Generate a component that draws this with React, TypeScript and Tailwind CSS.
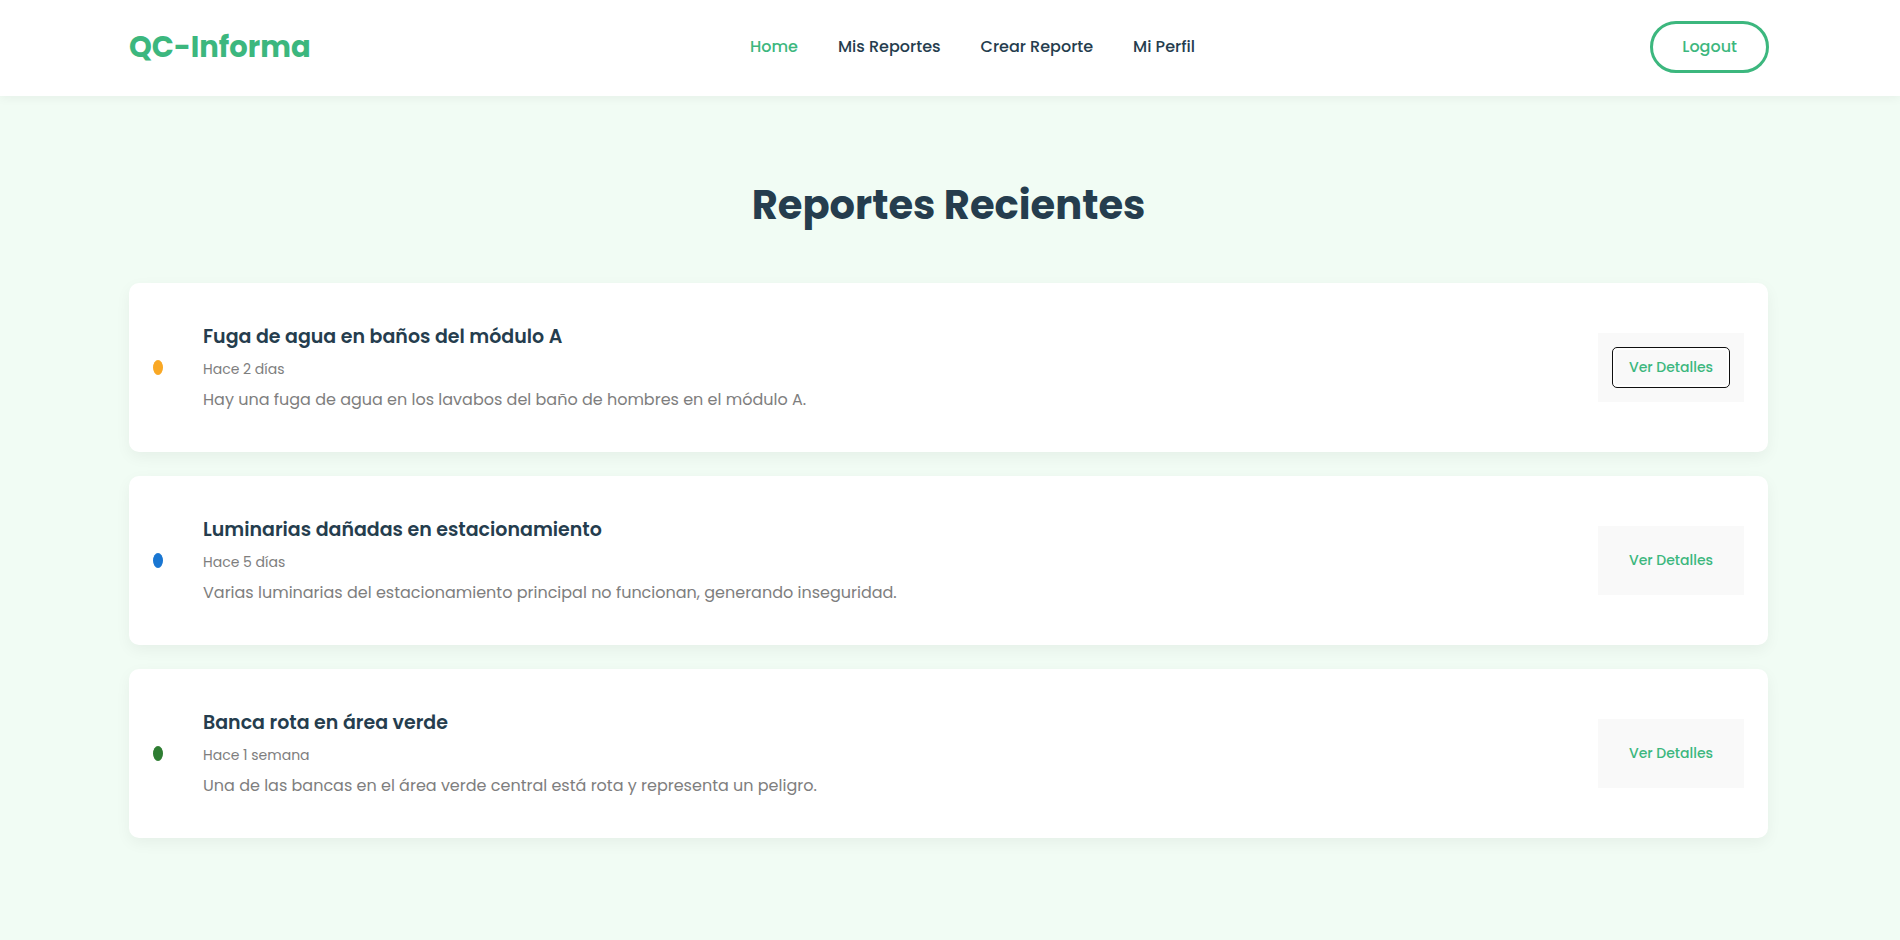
type Report = {
  id: string;
  title: string;
  date: string;
  description: string;
  dot: string;
  focused?: boolean;
};

const links = [
  { label: "Home", active: true },
  { label: "Mis Reportes", active: false },
  { label: "Crear Reporte", active: false },
  { label: "Mi Perfil", active: false },
];

const reports: Report[] = [
  {
    id: "fuga",
    title: "Fuga de agua en baños del módulo A",
    date: "Hace 2 días",
    description: "Hay una fuga de agua en los lavabos del baño de hombres en el módulo A.",
    dot: "bg-[#f9a825]",
    focused: true,
  },
  {
    id: "luminarias",
    title: "Luminarias dañadas en estacionamiento",
    date: "Hace 5 días",
    description: "Varias luminarias del estacionamiento principal no funcionan, generando inseguridad.",
    dot: "bg-[#1976d2]",
  },
  {
    id: "banca",
    title: "Banca rota en área verde",
    date: "Hace 1 semana",
    description: "Una de las bancas en el área verde central está rota y representa un peligro.",
    dot: "bg-[#2e7d32]",
  },
];

function Header() {
  return (
    <header className="relative flex items-center justify-between bg-white pt-[21px] pr-[131px] pb-[23px] pl-[129px] shadow-[0_2px_10px_rgba(0,0,0,0.05)]">
      <a href="#" className="text-[29px] leading-10 font-bold text-[#3cb77e]">
        QC-Informa
      </a>
      <nav className="mr-4 flex gap-10">
        {links.map((link) => (
          <a
            key={link.label}
            href="#"
            className={`text-base font-medium ${link.active ? "text-[#3cb77e]" : "text-[#253d4e]"}`}
          >
            {link.label}
          </a>
        ))}
      </nav>
      <button
        type="button"
        className="h-[52px] rounded-[30px] border-3 border-[#3cb77e] px-[29px] text-base font-medium text-[#3cb77e]"
      >
        Logout
      </button>
    </header>
  );
}

function ReportCard({ report }: { report: Report }) {
  return (
    <li className="flex items-center rounded-[10px] bg-white px-6 py-10 shadow-[0_5px_15px_rgba(0,0,0,0.05)]">
      <span className={`h-[15px] w-[10px] shrink-0 rounded-[50%] ${report.dot}`} />
      <div className="ml-10 grow">
        <h3 className="text-[19px] leading-7 font-semibold text-[#253d4e]">{report.title}</h3>
        <p className="mt-2 text-sm leading-5 text-[#7e7e7e]">{report.date}</p>
        <p className="mt-2 text-base leading-[25px] text-[#7e7e7e]">{report.description}</p>
      </div>
      <div className="shrink-0 bg-[#f9f9f9] p-[14px]">
        <button
          type="button"
          className={`block h-[41px] w-[118px] rounded-[5px] border pb-0.5 text-sm font-medium text-[#3cb77e] ${
            report.focused ? "border-[#101010] ring-2 ring-white ring-inset" : "border-transparent"
          }`}
        >
          Ver Detalles
        </button>
      </div>
    </li>
  );
}

export default function App() {
  return (
    <div className="min-h-screen bg-[#f1fcf4] font-['Poppins','Inter',sans-serif]">
      <Header />
      <main className="pt-[79px] pr-[132px] pb-20 pl-[129px]">
        <h2 className="text-center text-[40px] leading-[60px] font-bold text-[#253d4e]">
          Reportes Recientes
        </h2>
        <ul className="mt-12 flex flex-col gap-6">
          {reports.map((report) => (
            <ReportCard key={report.id} report={report} />
          ))}
        </ul>
      </main>
    </div>
  );
}
